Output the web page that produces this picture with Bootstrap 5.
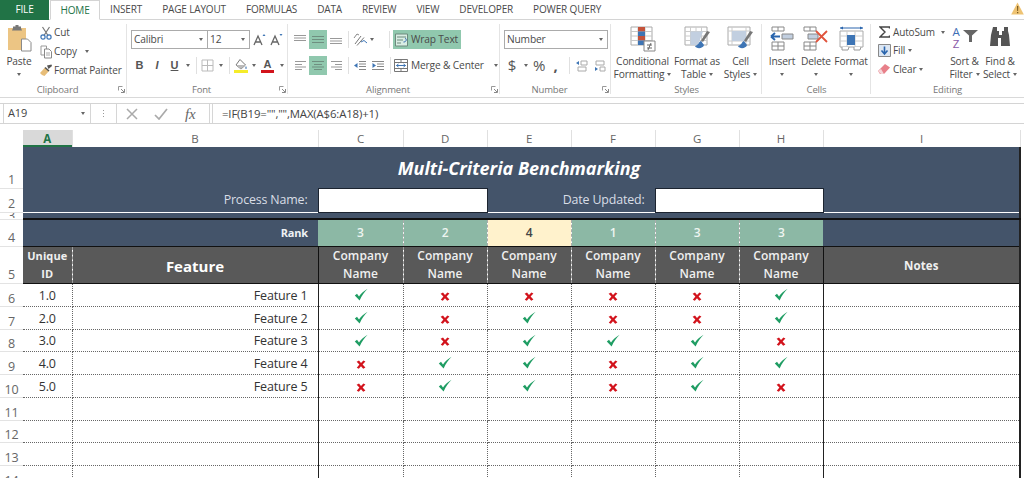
<!DOCTYPE html>
<html lang="en">
<head>
<meta charset="utf-8">
<title>Multi-Criteria Benchmarking</title>
<link href="https://cdn.jsdelivr.net/npm/bootstrap@5.3.0/dist/css/bootstrap.min.css" rel="stylesheet">
<style>
html,body{height:478px;overflow:hidden;background:#fff}
body{font-family:"Open Sans","Noto Sans",sans-serif;font-size:10px;letter-spacing:-.15px;color:#4a4a4a;width:1024px}
svg{display:block;flex:none}
.tabbar{height:20px;border-bottom:1px solid #d4d4d4;flex-wrap:nowrap;position:relative}
.tabbar .nav-link{padding:0 10px;height:20px;line-height:18px;color:#4a4a4a;font-size:10px;white-space:nowrap}
.tabbar .tfile{width:49px;padding:0;background:#217346;color:#fff;text-align:center;margin-right:1px}
.tabbar .thome{width:50px;padding:0;text-align:center;color:#217346;background:#fff;border:1px solid #d4d4d4;border-bottom-color:#fff;height:20px}
.warn{margin-left:auto;margin-top:2px;margin-right:-7px;width:20px;overflow:hidden}
.ribbon{height:78px;border-bottom:1px solid #d9d9d9}
.rgrp{display:flex;flex-direction:column;height:77px;flex:none;position:relative}
.rgrp::after{content:"";position:absolute;right:0;top:4px;bottom:3px;width:1px;background:#e4e4e4}
.g1{width:127px}.g2{width:161px}.g3{width:212px}.g4{width:111px}.g5{width:151px}.g6{width:109px}.g7{width:153px}
.g7::after{display:none}
.rbody{height:62px;flex:none}
.rlabel{height:15px;line-height:15px;color:#777;font-size:9.5px;text-align:center;display:flex;align-items:center}
.rlabel span{flex:1}
.launch{width:12px;flex:none;display:flex;justify-content:center}
.crt{display:block;width:0;height:0;border-left:2.5px solid transparent;border-right:2.5px solid transparent;border-top:3px solid #666;flex:none}
.slot{display:flex;align-items:center;justify-content:center;height:19px}
.row1,.row2{display:grid;height:19px}
.row1{margin-top:10px}
.row2{margin-top:7px}
.sep{width:1px;height:17px;background:#e0e0e0}
.on{background:#90c8ae}
.pastebtn{width:38px;text-align:center;padding-top:4px;display:flex;flex-direction:column;align-items:center;line-height:13px;font-size:10.2px}
.pastebtn svg:first-child{margin-bottom:3px}
.pastebtn .crt{margin-top:5px}
.mini{display:flex;align-items:center;height:19px;white-space:nowrap;font-size:10px}
.mini .ic{width:16px;display:flex;justify-content:center;flex:none}
.minicol{padding-top:3px}
.cmb{border:1px solid #ababab;height:19px;display:flex;align-items:center;justify-content:space-between;padding:0 4px 0 2px;font-size:10.2px;background:#fff}
.f-row1{grid-template-columns:77px 42px 1px 17px 17px;margin-left:4px}
.f-row1 .cmb + .cmb{border-left:none}
.f-row2{grid-template-columns:17px 18px 17px 10px 6px 17px 10px 6px 18px 8px 19px 9px;margin-left:4px}
.fb{font-weight:700;font-size:11px;color:#555;font-family:"Liberation Sans",sans-serif}
.a-row1{grid-template-columns:18px 18px 18px 6px 18px 6px 11px 7px 68px;margin-left:3px}
.a-row2{grid-template-columns:18px 18px 18px 6px 18px 18px 6px 1fr;margin-left:3px}
.wrapbtn,.mergebtn{display:flex;align-items:center;gap:3px;white-space:nowrap;font-size:10.2px;padding-left:2px}
.mergebtn{padding-left:1px}
.mergebtn .crt{margin-left:7px}
.n-row1{grid-template-columns:104px;margin-left:4px}
.n-row2{grid-template-columns:16px 11px 16px 17px 10px 15px 3px 16px;margin-left:4px}
.nsym{font-size:15px;color:#555;line-height:19px}
.tall{display:flex;flex-direction:column;align-items:center;text-align:center;line-height:13px;white-space:nowrap;height:62px;font-size:10.2px;padding-top:6px}
.tall .tic{height:29px;display:flex;align-items:flex-start;justify-content:center}
.tall .lab2{display:flex;align-items:center;gap:3px;height:13px;justify-content:center}
.st1{width:61px;margin-left:1px}.st2{width:48px}.st3{width:39px}
.ce1{width:34px;margin-left:3px}.ce2{width:34px}.ce3{width:36px}
.ed-left{width:76px;padding-top:3px;padding-left:5px}
.ed-left .mini{height:18.5px}
.ed-left .ic{width:16px;margin-right:1px}
.ed-left .crt{margin-left:3px}
.ed-left .wide{margin-left:6px}
.sortic{gap:2px}
.az{font-size:11.5px;line-height:12px;color:#3f6eb5;width:10px;text-align:center}
.az b{display:block;font-weight:400;color:#8a5aa8}
.ed1{width:35px}.ed2{width:36px}
.gap-strip{height:5px}
.fbar{height:21px;border-top:1px solid #d4d4d4;border-bottom:1px solid #d4d4d4;margin-top:0}
.namebox{width:88px;margin-left:3px;height:19px;border:1px solid #d6d6d6;border-width:0 1px 0 1px;padding:0 5px 0 4px;font-size:11px;color:#444}
.dots{width:25px;gap:2px}
.dots i{display:block;width:1px;height:1px;background:#999}
.fbtns{width:94px;height:19px;border:1px solid #d6d6d6;border-width:0 1px;padding-right:4px}
.fbtn{width:31px}
.fx{font-family:"Liberation Serif",serif;font-style:italic;font-size:15px;color:#666;line-height:18px;letter-spacing:0}
.finput{flex:1;border-left:1px solid #d6d6d6;height:19px;margin-left:2px;padding-left:9px;line-height:19px;font-size:11.4px;color:#444}
.gap-strip2{height:6px}
.sheet-wrap{height:348px;overflow:hidden}
table.sheet{width:1020px;table-layout:fixed;border-collapse:collapse;margin:0;--bs-table-bg:transparent;font-size:12.5px;color:#333}
.sheet>tbody>tr>td,.sheet>tbody>tr>th{padding:0;border:none;overflow:hidden;text-align:center;vertical-align:middle;font-weight:400;white-space:nowrap;line-height:1}
.sheet .c0{width:23px}.sheet .c1{width:49px}.sheet .c2{width:246px}.sheet .c3{width:85px}.sheet .c4{width:84px}.sheet .c9{width:197px}
.h0{height:17px}.h41{height:41px}.h24{height:24px}.h7{height:7px}.h27{height:27px}.h36{height:36px}.h23{height:23px}.h22{height:22px}
.sheet>tbody>tr>th.rh{color:#666;font-size:12.5px;vertical-align:bottom;padding-bottom:1px;border-bottom:1px solid #e3e3e3;line-height:14px;background:#fff}
.sheet>tbody>tr.h23>th.rh,.sheet>tbody>tr.h22>th.rh{padding-bottom:0}
.rh3{display:flex;height:5px;overflow:hidden;align-items:flex-end;justify-content:center;margin-bottom:0;line-height:5px}
.sheet>tbody>tr>th.ch{color:#666;font-size:11.5px;border-right:1px solid #e0e0e0;border-bottom:none;background:#fff}
.sheet>tbody>tr>th.ch.sel{background:#d9d9d9;color:#217346;font-weight:700;box-shadow:inset 0 -2px 0 #217346}
.sheet td.navy{background:#44546a;color:#e8ebf0}
.sheet td.gray{background:#595959;color:#f0f0f0;font-weight:600;font-size:12px}
.sheet>tbody>tr>td.gray{white-space:normal;line-height:18px;letter-spacing:.1px;padding-top:0}
.sheet>tbody>tr>td.gray.uid{font-size:11px;font-weight:700}
.sheet td.rank{background:#8cb8a5;color:#eef5f1;font-weight:600;font-size:12px}
.sheet td.rankw{background:#fff2cc;color:#444;font-weight:600;font-size:12px}
.sheet>tbody>tr>td.title{font-size:18px;font-weight:700;font-style:italic;color:#fff;letter-spacing:0;padding:2px 4px 0 0;vertical-align:middle;border-right:2px solid #222}
.sheet>tbody>tr>td.lbl{text-align:right;padding-right:10px;font-size:12.4px;color:#d9dee6;padding-top:1px}
.sheet>tbody>tr>td.rankl{text-align:right;padding-right:10px;font-size:11px;font-weight:700;color:#eef1f4}
.sheet td.box{background:#fff;border:1px solid #1c2430!important}
.rbb{border-bottom:2px solid #111!important}
.rbb1{border-bottom:1.5px solid #111!important}
.sheet>tbody>tr>td.rr{border-right:2px solid #222}
.sheet>tbody>tr>td.vd{border-right:1px dashed #aaa}
.sheet>tbody>tr>td.gray.vd{border-right:1px dashed #9a9a9a}
.sheet>tbody>tr>td.vb{border-right:1.5px solid #111}
.sheet>tbody>tr>td.dat{border-bottom:1px dotted #666;background:#fff;font-size:12.5px;color:#333;padding-top:3px}
.sheet>tbody>tr>td.vda{border-right:1px dotted #666}
.sheet>tbody>tr>td.vsa{border-right:1.5px solid #222}
.sheet>tbody>tr>td.fname{text-align:right;padding-right:10px}
.mk{margin:0 auto}
.mkc{margin:-3px auto 0}
.sheet>tbody>tr>td.gray.feat{font-size:15px;font-weight:700;color:#fff;letter-spacing:0;padding-top:3px}
.sheet>tbody>tr>td.gray.notes{font-size:11.5px;font-weight:700;padding-top:3px}
</style>
</head>
<body>
<svg width="0" height="0" class="position-absolute">
<defs>
<symbol id="ck" viewBox="0 0 14 13"><path d="M.8 7.600 3 5.800 5 8.600C7 5.600 10 2.800 13.600.8 10.400 4 7.800 7.800 5.600 12.400Z" fill="#1f9d63"/></symbol>
<symbol id="xx" viewBox="0 0 10 9"><path d="M.6 1.800 3 .6 5 3 7.400.4 9.400 1.400 6.600 4.600 9.400 7.600 7.200 8.800 5 6.200 2.800 8.800.8 7.800 3.400 4.600Z" fill="#d2131c"/></symbol>
<symbol id="launch" viewBox="0 0 7 7"><path d="M.5.5h4M.5.5v4" stroke="#999" fill="none"/><path d="M6.500 6.500H3M6.500 6.500V3M6 6 3 3" stroke="#888" fill="none"/></symbol>
</defs>
</svg>

<nav class="nav tabbar">
  <a class="nav-link tfile" href="#">FILE</a>
  <a class="nav-link thome" href="#">HOME</a>
  <a class="nav-link" href="#">INSERT</a>
  <a class="nav-link" href="#">PAGE LAYOUT</a>
  <a class="nav-link" href="#">FORMULAS</a>
  <a class="nav-link" href="#">DATA</a>
  <a class="nav-link" href="#">REVIEW</a>
  <a class="nav-link" href="#">VIEW</a>
  <a class="nav-link" href="#">DEVELOPER</a>
  <a class="nav-link" href="#">POWER QUERY</a>
  <div class="warn d-flex align-items-start gap-1"><svg width="13" height="13" viewBox="0 0 13 13"><path d="M6.500.5 12.800 12.500H.2Z" fill="#eec373"/><path d="M6 4h1.300l-.2 5H6.200ZM6 10h1.300v1.300H6Z" fill="#7a5a20"/></svg><span>D</span></div>
</nav>

<div class="ribbon d-flex">
  <!-- Clipboard -->
  <section class="rgrp g1">
    <div class="rbody d-flex">
      <div class="pastebtn">
        <svg width="26" height="28" viewBox="0 0 26 28"><rect x="2" y="4" width="18" height="22" fill="#ecc584"/><path d="M7 4V2.500h2.500V1h3v1.500H15V4l1 2.500H6Z" fill="#777"/><path d="M15.500 15h6l3.500 3.500V27H15.500Z" fill="#fff" stroke="#8a8a8a"/></svg>
        <span>Paste</span><i class="crt"></i>
      </div>
      <div class="minicol">
        <div class="mini"><span class="ic"><svg width="12" height="14" viewBox="0 0 12 14"><path d="M2.500 1 8 9.500M9.500 1 4 9.500" stroke="#777" stroke-width="1.200" fill="none"/><circle cx="3" cy="11" r="2.100" fill="none" stroke="#3e75b5" stroke-width="1.200"/><circle cx="9" cy="11" r="2.100" fill="none" stroke="#3e75b5" stroke-width="1.200"/></svg></span>Cut</div>
        <div class="mini"><span class="ic"><svg width="13" height="14" viewBox="0 0 13 14"><path d="M1 1h5.500v9H1Z" fill="#fff" stroke="#999"/><path d="M4.500 4H9l2.500 2.500V13h-7Z" fill="#fff" stroke="#888"/><path d="M6 8h4M6 10h4" stroke="#aaa"/></svg></span>Copy<i class="crt ms-2"></i></div>
        <div class="mini"><span class="ic"><svg width="14" height="13" viewBox="0 0 14 13"><path d="M8 1.500 12.500.5 13 2 9.500 5Z" fill="#555"/><path d="M1 9 6 3.500 10 7 5.500 12 3 11Z" fill="#e7bd78"/><path d="M6 3.500 10 7" stroke="#555" stroke-width="1.500"/></svg></span>Format Painter</div>
      </div>
    </div>
    <div class="rlabel"><span>Clipboard</span><div class="launch"><svg width="7" height="7"><use href="#launch"/></svg></div></div>
  </section>
  <!-- Font -->
  <section class="rgrp g2">
    <div class="rbody">
      <div class="row1 f-row1">
        <div class="cmb"><span>Calibri</span><i class="crt"></i></div>
        <div class="cmb"><span>12</span><i class="crt"></i></div>
        <div></div>
        <div class="slot"><svg width="14" height="13" viewBox="0 0 14 13"><path d="M1 12 5 3l4 9M2.500 9h5" stroke="#666" stroke-width="1.300" fill="none"/><path d="M9.500 3 11 1l1.500 2Z" fill="#3e75b5"/></svg></div>
        <div class="slot"><svg width="14" height="13" viewBox="0 0 14 13"><path d="M1 12 5 3l4 9M2.500 9h5" stroke="#666" stroke-width="1.300" fill="none"/><path d="M9.500 1 11 3l1.500-2Z" fill="#3e75b5"/></svg></div>
      </div>
      <div class="row2 f-row2">
        <div class="slot fb">B</div>
        <div class="slot fb fst-italic">I</div>
        <div class="slot fb text-decoration-underline">U</div>
        <div class="slot"><i class="crt"></i></div>
        <div class="slot"><i class="sep"></i></div>
        <div class="slot"><svg width="13" height="13" viewBox="0 0 13 13"><path d="M1 1h11v11H1ZM6.500 1v11M1 6.500h11" fill="none" stroke="#bbb"/></svg></div>
        <div class="slot"><i class="crt"></i></div>
        <div class="slot"><i class="sep"></i></div>
        <div class="slot"><svg width="14" height="15" viewBox="0 0 14 15"><path d="M6 1.500 11.500 7 7 11 2 7Z" fill="#fff" stroke="#777"/><path d="M2 7h9l-4 4Z" fill="#bbb"/><path d="M12 8c1 1.500 1 3 0 3s-1-1.500 0-3Z" fill="#5a86b8"/><rect y="12" width="14" height="3" fill="#f5ec2a"/></svg></div>
        <div class="slot"><i class="crt"></i></div>
        <div class="slot"><div class="d-flex flex-column align-items-center"><span class="fb lh-1">A</span><svg width="13" height="3"><rect width="13" height="3" fill="#d2131c"/></svg></div></div>
        <div class="slot"><i class="crt"></i></div>
      </div>
    </div>
    <div class="rlabel"><span>Font</span><div class="launch"><svg width="7" height="7"><use href="#launch"/></svg></div></div>
  </section>
  <!-- Alignment -->
  <section class="rgrp g3">
    <div class="rbody">
      <div class="row1 a-row1">
        <div class="slot"><svg width="12" height="9" viewBox="0 0 12 9"><path d="M0 .5h12M0 3h12M0 5.500h12" stroke="#999"/></svg></div>
        <div class="slot on"><svg width="12" height="9" viewBox="0 0 12 9"><path d="M0 1.500h12M0 4.500h12M0 7.500h12" stroke="#6f8f80"/></svg></div>
        <div class="slot"><svg width="12" height="9" viewBox="0 0 12 9"><path d="M0 3.500h12M0 6h12M0 8.500h12" stroke="#999"/></svg></div>
        <div class="slot"><i class="sep"></i></div>
        <div class="slot"><svg width="14" height="13" viewBox="0 0 14 13"><path d="M2 11 8 3M4 12.500l7-8" stroke="#777"/><path d="M8 9l3-1.500 3 2.500" stroke="#3e75b5" fill="none"/><path d="M1 5l3-4 2 1" stroke="#888" fill="none"/></svg></div>
        <div class="slot"><i class="crt"></i></div>
        <div></div>
        <div class="slot"><i class="sep"></i></div>
        <div class="wrapbtn on"><svg width="13" height="14" viewBox="0 0 13 14"><path d="M.5 1h12v12H.5Z" fill="#d9eee4" stroke="#6d8a7d"/><path d="M2 4h9M2 7h6M2 10h4" stroke="#6d8a7d"/><path d="M10 5c2 1 1.500 4-1.500 4" stroke="#2a65ad" fill="none"/></svg><span>Wrap Text</span></div>
      </div>
      <div class="row2 a-row2">
        <div class="slot"><svg width="11" height="9" viewBox="0 0 11 9"><path d="M0 .5h11M0 3.500h7M0 6h11M0 8.500h7" stroke="#999"/></svg></div>
        <div class="slot on"><svg width="12" height="9" viewBox="0 0 12 9"><path d="M0 .5h12M2 3.500h8M0 6h12M2 8.500h8" stroke="#6f8f80"/></svg></div>
        <div class="slot"><svg width="11" height="9" viewBox="0 0 11 9"><path d="M0 .5h11M4 3.500h7M0 6h11M4 8.500h7" stroke="#999"/></svg></div>
        <div class="slot"><i class="sep"></i></div>
        <div class="slot"><svg width="12" height="9" viewBox="0 0 12 9"><path d="M5 .5h7M5 3h7M5 5.500h7M5 8.500h7" stroke="#888"/><path d="M0 4.500 3.500 2v5Z" fill="#3e75b5"/></svg></div>
        <div class="slot"><svg width="12" height="9" viewBox="0 0 12 9"><path d="M0 .5h12M5 3h7M5 5.500h7M0 8.500h12" stroke="#888"/><path d="M4 4.500 .5 2v5Z" fill="#3e75b5"/></svg></div>
        <div class="slot"><i class="sep"></i></div>
        <div class="mergebtn"><svg width="14" height="13" viewBox="0 0 14 13"><path d="M.5.500h13v12H.5ZM.5 3.500h13M.5 9.500h13M7 .5v3M7 9.500v3" fill="none" stroke="#777"/><path d="M2.500 6.500h9M2.500 6.500l2-1.500M2.500 6.500l2 1.500M11.500 6.500l-2-1.500M11.500 6.500l-2 1.500" stroke="#3e75b5" fill="none"/></svg><span>Merge &amp; Center</span><i class="crt"></i></div>
      </div>
    </div>
    <div class="rlabel"><span>Alignment</span><div class="launch"><svg width="7" height="7"><use href="#launch"/></svg></div></div>
  </section>
  <!-- Number -->
  <section class="rgrp g4">
    <div class="rbody">
      <div class="row1 n-row1"><div class="cmb"><span>Number</span><i class="crt"></i></div></div>
      <div class="row2 n-row2">
        <div class="slot nsym">$</div>
        <div class="slot"><i class="crt"></i></div>
        <div class="slot nsym">%</div>
        <div class="slot nsym fw-bold">,</div>
        <div class="slot"><i class="sep"></i></div>
        <div class="slot"><svg width="12" height="12" viewBox="0 0 12 12"><path d="M5 1h6v4H5Z M2 7h8v4H2Z" fill="none" stroke="#aaa"/><path d="M0 3l3-2v4Z" fill="#3e75b5"/></svg></div>
        <div></div>
        <div class="slot"><svg width="12" height="12" viewBox="0 0 12 12"><path d="M2 1h8v4H2Z M6 7h5v4H6Z" fill="none" stroke="#aaa"/><path d="M4 9 1 7v4Z" fill="#3e75b5"/></svg></div>
      </div>
    </div>
    <div class="rlabel"><span>Number</span><div class="launch"><svg width="7" height="7"><use href="#launch"/></svg></div></div>
  </section>
  <!-- Styles -->
  <section class="rgrp g5">
    <div class="rbody d-flex">
      <div class="tall st1">
        <div class="tic"><svg width="26" height="26" viewBox="0 0 26 26"><path d="M1 1h21v18H1Z" fill="#fff" stroke="#aaa"/><path d="M1 5.500h21M1 10h21M1 14.500h21M8 1v18M15 1v18" stroke="#c8c8c8"/><path d="M8 1h7v4.500H8Z" fill="#c4523a"/><path d="M8 5.500h7V10H8Z" fill="#3e75b5"/><path d="M8 10h7v4.500H8Z" fill="#c4523a"/><path d="M8 14.500h7V19H8Z" fill="#3e75b5"/><path d="M14 15h11v10H14Z" fill="#fff" stroke="#888"/><path d="M17 19h5M17 22h5M18 24l3-7" stroke="#666"/></svg></div>
        <span>Conditional</span><span class="lab2">Formatting <i class="crt"></i></span>
      </div>
      <div class="tall st2">
        <div class="tic"><svg width="27" height="26" viewBox="0 0 27 26"><path d="M1 1h22v18H1Z" fill="#fff" stroke="#aaa"/><path d="M1 5.500h22M1 10h22M1 14.500h22M6.500 1v18M12 1v18M17.500 1v18" stroke="#ccc"/><path d="M6.500 5.500H19L14 19H6.500Z" fill="#c2cfe0"/><path d="M26 6 19 16l-2-1.500L23 5Z" fill="#777"/><path d="M17 15c-2 0-2 4-6 5 1 3 8 3 9-1Z" fill="#3e75b5"/></svg></div>
        <span>Format as</span><span class="lab2">Table <i class="crt"></i></span>
      </div>
      <div class="tall st3">
        <div class="tic"><svg width="27" height="26" viewBox="0 0 27 26"><path d="M1 1h22v18H1Z" fill="#fff" stroke="#aaa"/><path d="M1 5h22M5 1v18M19 1v18M1 15h22" stroke="#ccc"/><path d="M5 5h14v10H5Z" fill="#c2cfe0"/><path d="M26 6 19 16l-2-1.500L23 5Z" fill="#777"/><path d="M17 15c-2 0-2 4-6 5 1 3 8 3 9-1Z" fill="#3e75b5"/></svg></div>
        <span>Cell</span><span class="lab2">Styles <i class="crt"></i></span>
      </div>
    </div>
    <div class="rlabel"><span>Styles</span></div>
  </section>
  <!-- Cells -->
  <section class="rgrp g6">
    <div class="rbody d-flex">
      <div class="tall ce1">
        <div class="tic"><svg width="26" height="26" viewBox="0 0 26 26"><path d="M3 1h12v4H3ZM9 1v4M3 16h12v8H3ZM9 16v8M3 20h12" fill="#fff" stroke="#888"/><path d="M13 8h11v5H13Z" fill="#c2cfe0" stroke="#888"/><path d="M11 10.500H2M2 10.500l4-3.500M2 10.500 6 14" stroke="#2a65ad" stroke-width="2" fill="none"/></svg></div>
        <span>Insert</span><span class="lab2"><i class="crt"></i></span>
      </div>
      <div class="tall ce2">
        <div class="tic"><svg width="26" height="26" viewBox="0 0 26 26"><path d="M1 1h12v4H1ZM7 1v4M1 16h12v8H1ZM7 16v8M1 20h12" fill="#fff" stroke="#888"/><path d="M5 8h10v5H5Z" fill="#c2cfe0" stroke="#888"/><path d="M13 5l11 11M24 5 13 16" stroke="#e0533c" stroke-width="1.800"/></svg></div>
        <span>Delete</span><span class="lab2"><i class="crt"></i></span>
      </div>
      <div class="tall ce3">
        <div class="tic"><svg width="25" height="26" viewBox="0 0 25 26"><path d="M1 2h23" stroke="#2a65ad"/><path d="M1 2l3-1.500v3ZM24 2l-3-1.500v3Z" fill="#2a65ad"/><path d="M1 5h23v16H1Z" fill="#fff" stroke="#aaa"/><path d="M1 10h23M1 15h23M8 5v16M16 5v16" stroke="#ccc"/><path d="M8 9h8v10H8Z" fill="#3e75b5"/><path d="M3 21v3h6l1-3M15 21v3h6l1-3" fill="#fff" stroke="#999"/></svg></div>
        <span>Format</span><span class="lab2"><i class="crt"></i></span>
      </div>
    </div>
    <div class="rlabel"><span>Cells</span></div>
  </section>
  <!-- Editing -->
  <section class="rgrp g7">
    <div class="rbody d-flex">
      <div class="ed-left">
        <div class="mini"><span class="ic"><svg width="11" height="12" viewBox="0 0 11 12"><path d="M10.500 2.500V1H1l5 5-5 5h9.500V9.500" fill="none" stroke="#444" stroke-width="1.400"/></svg></span>AutoSum<i class="crt wide"></i></div>
        <div class="mini"><span class="ic"><svg width="13" height="13" viewBox="0 0 13 13"><path d="M.5.500h12v12H.5Z" fill="#dce6f2" stroke="#888"/><path d="M6.500 2.500v7M3.500 6.500l3 3.500 3-3.500" fill="none" stroke="#2a65ad" stroke-width="1.600"/></svg></span>Fill<i class="crt"></i></div>
        <div class="mini"><span class="ic"><svg width="14" height="12" viewBox="0 0 14 12"><path d="M1 8 8 1l5 3.500-6 6.500H3Z" fill="#e8808a"/><path d="M1 8l3 3h3L4 6Z" fill="#f5d7da"/></svg></span>Clear<i class="crt"></i></div>
      </div>
      <div class="tall ed1">
        <div class="tic sortic"><div class="az">A<b>Z</b></div><svg class="mt-1" width="15" height="12" viewBox="0 0 15 12"><path d="M0 0h15L9 5.500V12H6V5.500Z" fill="#666"/></svg></div>
        <span>Sort &amp;</span><span class="lab2">Filter <i class="crt"></i></span>
      </div>
      <div class="tall ed2">
        <div class="tic"><svg width="23" height="21" viewBox="0 0 23 21"><path d="M4 1h4v4h2v4h3V5h2V1h4v4l1 4 1 11h-9V12h-3v8H1L2 9l1-4Z" fill="#555"/></svg></div>
        <span>Find &amp;</span><span class="lab2">Select <i class="crt"></i></span>
      </div>
    </div>
    <div class="rlabel"><span>Editing</span></div>
  </section>
</div>

<div class="gap-strip"></div>

<div class="fbar d-flex align-items-center">
  <div class="namebox d-flex align-items-center justify-content-between"><span>A19</span><i class="crt"></i></div>
  <div class="dots d-flex flex-column align-items-center justify-content-center"><i></i><i></i><i></i></div>
  <div class="fbtns d-flex align-items-center justify-content-end">
    <div class="fbtn d-flex justify-content-center"><svg width="12" height="12" viewBox="0 0 12 12"><path d="M1 1l10 10M11 1 1 11" stroke="#aaa" stroke-width="1.500"/></svg></div>
    <div class="fbtn d-flex justify-content-center"><svg width="14" height="12" viewBox="0 0 14 12"><path d="M1 7l4 4 8-10" fill="none" stroke="#aaa" stroke-width="1.700"/></svg></div>
    <div class="fbtn d-flex justify-content-center fx">fx</div>
  </div>
  <div class="finput">=IF(B19="","",MAX(A$6:A18)+1)</div>
</div>

<div class="gap-strip2"></div>

<div class="sheet-wrap">
<table class="table sheet">
<colgroup><col class="c0"><col class="c1"><col class="c2"><col class="c3"><col class="c4"><col class="c4"><col class="c4"><col class="c4"><col class="c4"><col class="c9"></colgroup>
<tbody>
<tr class="h0"><th class="ch border-0"></th><th class="ch sel">A</th><th class="ch">B</th><th class="ch">C</th><th class="ch">D</th><th class="ch">E</th><th class="ch">F</th><th class="ch">G</th><th class="ch">H</th><th class="ch">I</th></tr>
<tr class="h41"><th class="rh">1</th><td class="navy title" colspan="9">Multi-Criteria Benchmarking</td></tr>
<tr class="h24"><th class="rh">2</th><td class="navy lbl" colspan="2">Process Name:</td><td class="box" colspan="2"></td><td class="navy lbl" colspan="2">Date Updated:</td><td class="box" colspan="2"></td><td class="navy rr"></td></tr>
<tr class="h7"><th class="rh"><div class="rh3">3</div></th><td class="navy rbb rr" colspan="9"></td></tr>
<tr class="h27"><th class="rh">4</th><td class="navy rankl rbb1" colspan="2">Rank</td><td class="rank vd rbb1">3</td><td class="rank vd rbb1">2</td><td class="rankw vd rbb1">4</td><td class="rank vd rbb1">1</td><td class="rank vd rbb1">3</td><td class="rank rbb1">3</td><td class="navy rr rbb1"></td></tr>
<tr class="h36"><th class="rh">5</th><td class="gray uid vd rbb1">Unique ID</td><td class="gray feat vb rbb1">Feature</td><td class="gray vd rbb1">Company Name</td><td class="gray vd rbb1">Company Name</td><td class="gray vd rbb1">Company Name</td><td class="gray vd rbb1">Company Name</td><td class="gray vd rbb1">Company Name</td><td class="gray vb rbb1">Company Name</td><td class="gray notes rr rbb1">Notes</td></tr>
<tr class="h23"><th class="rh">6</th><td class="dat vda">1.0</td><td class="dat fname vsa">Feature 1</td><td class="dat vda"><svg class="mkc" width="14" height="13"><use href="#ck"/></svg></td><td class="dat vda"><svg class="mk" width="10" height="9"><use href="#xx"/></svg></td><td class="dat vda"><svg class="mk" width="10" height="9"><use href="#xx"/></svg></td><td class="dat vda"><svg class="mk" width="10" height="9"><use href="#xx"/></svg></td><td class="dat vda"><svg class="mk" width="10" height="9"><use href="#xx"/></svg></td><td class="dat vsa"><svg class="mkc" width="14" height="13"><use href="#ck"/></svg></td><td class="dat rr"></td></tr>
<tr class="h23"><th class="rh">7</th><td class="dat vda">2.0</td><td class="dat fname vsa">Feature 2</td><td class="dat vda"><svg class="mkc" width="14" height="13"><use href="#ck"/></svg></td><td class="dat vda"><svg class="mk" width="10" height="9"><use href="#xx"/></svg></td><td class="dat vda"><svg class="mkc" width="14" height="13"><use href="#ck"/></svg></td><td class="dat vda"><svg class="mk" width="10" height="9"><use href="#xx"/></svg></td><td class="dat vda"><svg class="mk" width="10" height="9"><use href="#xx"/></svg></td><td class="dat vsa"><svg class="mkc" width="14" height="13"><use href="#ck"/></svg></td><td class="dat rr"></td></tr>
<tr class="h22"><th class="rh">8</th><td class="dat vda">3.0</td><td class="dat fname vsa">Feature 3</td><td class="dat vda"><svg class="mkc" width="14" height="13"><use href="#ck"/></svg></td><td class="dat vda"><svg class="mk" width="10" height="9"><use href="#xx"/></svg></td><td class="dat vda"><svg class="mkc" width="14" height="13"><use href="#ck"/></svg></td><td class="dat vda"><svg class="mkc" width="14" height="13"><use href="#ck"/></svg></td><td class="dat vda"><svg class="mkc" width="14" height="13"><use href="#ck"/></svg></td><td class="dat vsa"><svg class="mk" width="10" height="9"><use href="#xx"/></svg></td><td class="dat rr"></td></tr>
<tr class="h23"><th class="rh">9</th><td class="dat vda">4.0</td><td class="dat fname vsa">Feature 4</td><td class="dat vda"><svg class="mk" width="10" height="9"><use href="#xx"/></svg></td><td class="dat vda"><svg class="mkc" width="14" height="13"><use href="#ck"/></svg></td><td class="dat vda"><svg class="mkc" width="14" height="13"><use href="#ck"/></svg></td><td class="dat vda"><svg class="mk" width="10" height="9"><use href="#xx"/></svg></td><td class="dat vda"><svg class="mkc" width="14" height="13"><use href="#ck"/></svg></td><td class="dat vsa"><svg class="mkc" width="14" height="13"><use href="#ck"/></svg></td><td class="dat rr"></td></tr>
<tr class="h23"><th class="rh">10</th><td class="dat vda">5.0</td><td class="dat fname vsa">Feature 5</td><td class="dat vda"><svg class="mk" width="10" height="9"><use href="#xx"/></svg></td><td class="dat vda"><svg class="mkc" width="14" height="13"><use href="#ck"/></svg></td><td class="dat vda"><svg class="mkc" width="14" height="13"><use href="#ck"/></svg></td><td class="dat vda"><svg class="mk" width="10" height="9"><use href="#xx"/></svg></td><td class="dat vda"><svg class="mkc" width="14" height="13"><use href="#ck"/></svg></td><td class="dat vsa"><svg class="mk" width="10" height="9"><use href="#xx"/></svg></td><td class="dat rr"></td></tr>
<tr class="h23"><th class="rh">11</th><td class="dat vda"></td><td class="dat vsa"></td><td class="dat vda"></td><td class="dat vda"></td><td class="dat vda"></td><td class="dat vda"></td><td class="dat vda"></td><td class="dat vsa"></td><td class="dat rr"></td></tr>
<tr class="h22"><th class="rh">12</th><td class="dat vda"></td><td class="dat vsa"></td><td class="dat vda"></td><td class="dat vda"></td><td class="dat vda"></td><td class="dat vda"></td><td class="dat vda"></td><td class="dat vsa"></td><td class="dat rr"></td></tr>
<tr class="h23"><th class="rh">13</th><td class="dat vda"></td><td class="dat vsa"></td><td class="dat vda"></td><td class="dat vda"></td><td class="dat vda"></td><td class="dat vda"></td><td class="dat vda"></td><td class="dat vsa"></td><td class="dat rr"></td></tr>
<tr class="h23"><th class="rh">14</th><td class="dat vda"></td><td class="dat vsa"></td><td class="dat vda"></td><td class="dat vda"></td><td class="dat vda"></td><td class="dat vda"></td><td class="dat vda"></td><td class="dat vsa"></td><td class="dat rr"></td></tr>
</tbody>
</table>
</div>
<script src="https://cdn.jsdelivr.net/npm/bootstrap@5.3.0/dist/js/bootstrap.bundle.min.js"></script>
</body>
</html>
